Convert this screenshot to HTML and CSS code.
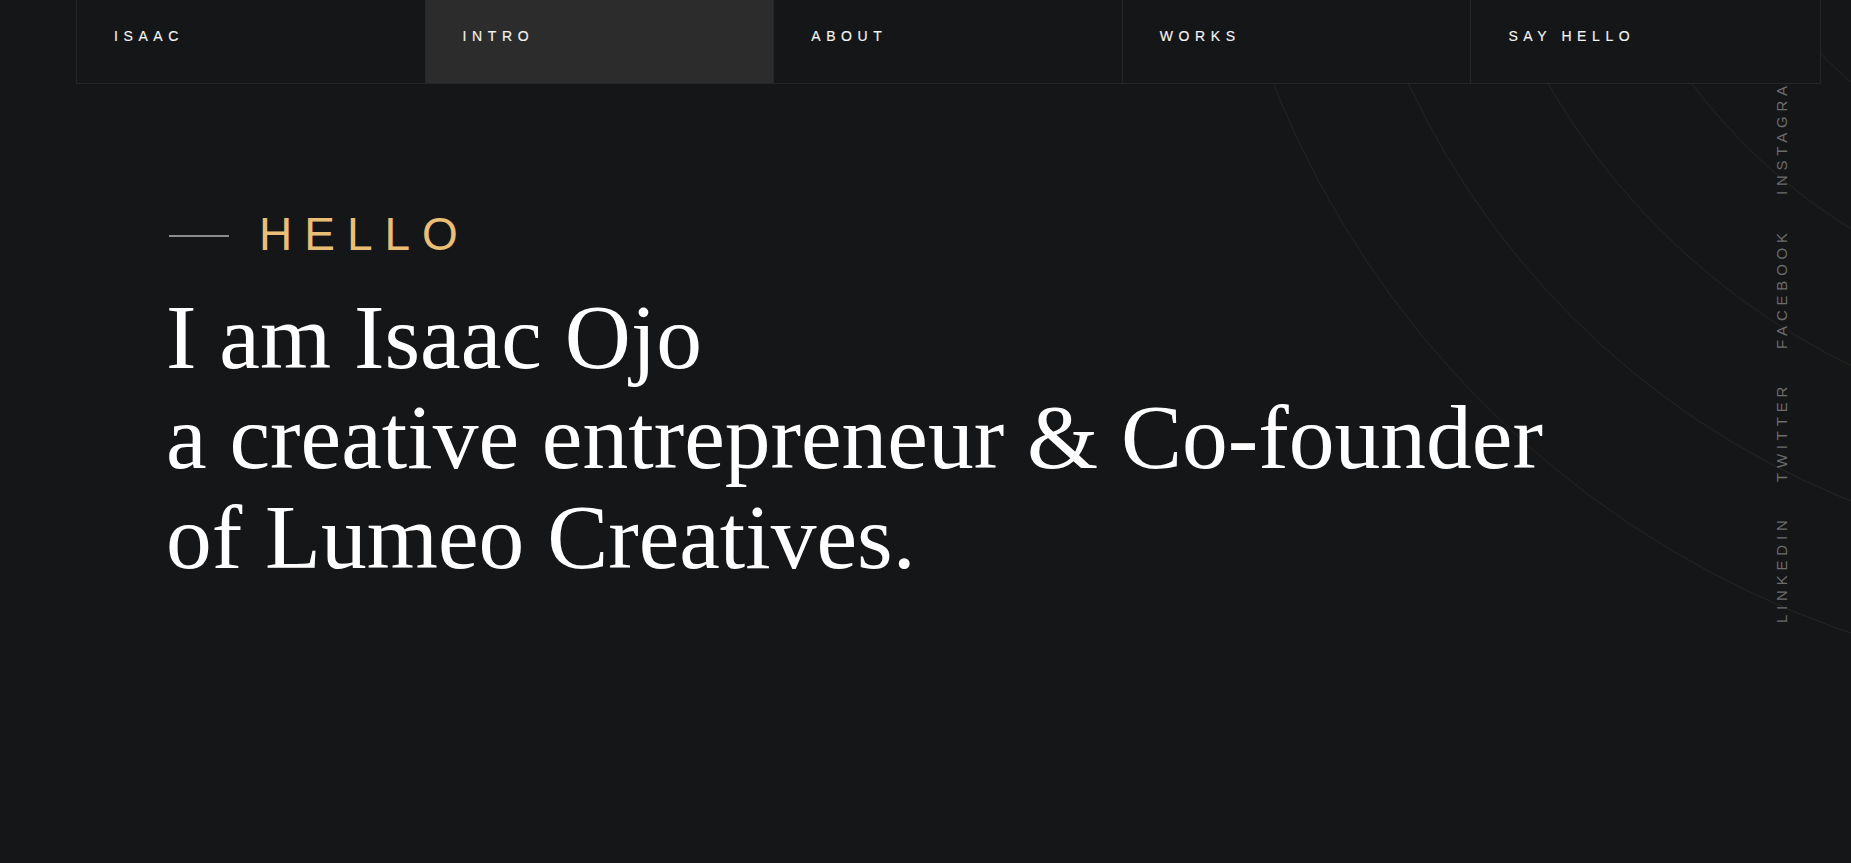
FILE: index.html
```html
<!DOCTYPE html>
<html lang="en">
<head>
<meta charset="utf-8">
<title>Isaac Ojo</title>
<link rel="stylesheet" href="styles.css">
</head>
<body>
<div class="page">
  <svg class="rings" width="1851" height="863" viewBox="0 0 1851 863" aria-hidden="true">
    <g fill="none" stroke="#27251f" stroke-width="1">
      <circle cx="2158" cy="-268" r="952"/>
      <circle cx="2158" cy="-268" r="828"/>
      <circle cx="2158" cy="-268" r="704"/>
      <circle cx="2158" cy="-268" r="584"/>
      <circle cx="2158" cy="-268" r="466"/>
    </g>
  </svg>

  <header class="nav">
    <a class="nav-item">ISAAC</a>
    <a class="nav-item active">INTRO</a>
    <a class="nav-item">ABOUT</a>
    <a class="nav-item">WORKS</a>
    <a class="nav-item">SAY HELLO</a>
  </header>

  <ul class="social">
    <li>LINKEDIN</li>
    <li>TWITTER</li>
    <li>FACEBOOK</li>
    <li>INSTAGRAM</li>
  </ul>

  <main class="hero">
    <div class="eyebrow">
      <span class="eyebrow-line"></span>
      <span class="eyebrow-text">HELLO</span>
    </div>
    <h1 class="title">I am Isaac Ojo<br>a creative entrepreneur &amp; Co-founder<br>of Lumeo Creatives.</h1>
  </main>
</div>
</body>
</html>
```

FILE: styles.css
```css
html, body {
  margin: 0;
  padding: 0;
  background: #151618;
  overflow: hidden;
}

.page {
  position: relative;
  width: 1851px;
  height: 863px;
  overflow: hidden;
  font-family: "Liberation Sans", Arial, sans-serif;
}

.rings {
  position: absolute;
  top: 0;
  left: 0;
  z-index: 0;
}

.nav {
  position: relative;
  z-index: 2;
  margin-left: 76px;
  width: 1743px;
  height: 83px;
  display: grid;
  grid-template-columns: repeat(5, 1fr);
  background: #151618;
  border-left: 1px solid #25262a;
  border-right: 1px solid #25262a;
  border-bottom: 1px solid #25262a;
  box-sizing: content-box;
}

.nav-item {
  display: block;
  padding: 28px 0 0 37px;
  color: #f4f4f4;
  font-size: 14px;
  letter-spacing: 5.6px;
  text-decoration: none;
  border-right: 1px solid #25262a;
  -webkit-text-stroke: 0.15px #f4f4f4;
}

.nav-item:last-child {
  border-right: none;
}

.nav-item.active {
  background: #2c2c2c;
}

.social {
  position: absolute;
  z-index: 1;
  top: 64px;
  left: 1773px;
  margin: 0;
  padding: 0;
  list-style: none;
  display: flex;
  gap: 33px;
  writing-mode: vertical-rl;
  transform: rotate(180deg);
  color: #6c6d6f;
  font-size: 15px;
  letter-spacing: 4.8px;
  line-height: 17px;
}

.hero {
  position: relative;
  z-index: 1;
  padding: 124px 0 0 166px;
}

.eyebrow {
  display: flex;
  align-items: center;
  height: 53px;
}

.eyebrow-line {
  display: block;
  width: 60px;
  height: 2px;
  margin-left: 3px;
  margin-right: 30px;
  margin-top: 2px;
  background: #8c8c8c;
}

.eyebrow-text {
  color: #ebbe78;
  font-size: 46px;
  letter-spacing: 12px;
  line-height: 53px;
}

.title {
  margin: 26px 0 0 0;
  color: #ffffff;
  font-family: "Liberation Serif", "Times New Roman", serif;
  font-weight: 400;
  font-size: 91.5px;
  line-height: 100px;
  white-space: nowrap;
}
```
